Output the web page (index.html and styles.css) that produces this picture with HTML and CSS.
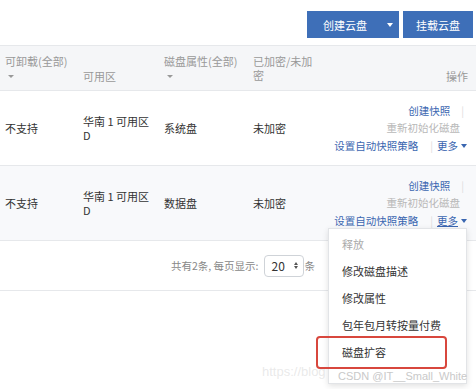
FILE: index.html
```html
<!DOCTYPE html>
<html lang="zh">
<head>
<meta charset="utf-8">
<link rel="stylesheet" href="styles.css">
</head>
<body>
<div class="page">
  <div class="toolbar">
    <button class="btn btn-split"><span>创建云盘</span><span class="caret-w"></span></button>
    <button class="btn">挂载云盘</button>
  </div>
  <div class="table">
    <div class="row head">
      <div class="cell c1"><div>可卸载(全部)</div><span class="caret-g"></span></div>
      <div class="cell c2 mid">可用区</div>
      <div class="cell c3"><div>磁盘属性(全部)</div><span class="caret-g"></span></div>
      <div class="cell c4">已加密/未加密</div>
      <div class="cell c5 mid">操作</div>
    </div>
    <div class="row body">
      <div class="cell c1 mid">不支持</div>
      <div class="cell c2 mid">华南 1 可用区 D</div>
      <div class="cell c3 mid">系统盘</div>
      <div class="cell c4 mid">未加密</div>
      <div class="cell c5 ops">
        <div class="op-line"><a class="link">创建快照</a><span class="sep">|</span></div>
        <div class="op-line"><span class="disabled pad">重新初始化磁盘</span></div>
        <div class="op-line"><a class="link">设置自动快照策略</a><span class="sep sep2">|</span><a class="link">更多</a><span class="caret-b"></span></div>
      </div>
    </div>
    <div class="row body alt">
      <div class="cell c1 mid">不支持</div>
      <div class="cell c2 mid">华南 1 可用区 D</div>
      <div class="cell c3 mid">数据盘</div>
      <div class="cell c4 mid">未加密</div>
      <div class="cell c5 ops">
        <div class="op-line"><a class="link">创建快照</a><span class="sep">|</span></div>
        <div class="op-line"><span class="disabled pad">重新初始化磁盘</span></div>
        <div class="op-line"><a class="link">设置自动快照策略</a><span class="sep sep2">|</span><a class="link under">更多</a><span class="caret-b"></span></div>
      </div>
    </div>
    <div class="pager">
      <span class="pager-text">共有2条, 每页显示:</span>
      <span class="select"><span>20</span><span class="spin"><i class="up"></i><i class="down"></i></span></span>
      <span class="pager-text">条</span>
    </div>
  </div>

  <ul class="menu">
    <li class="menu-item disabled">释放</li>
    <li class="menu-item">修改磁盘描述</li>
    <li class="menu-item">修改属性</li>
    <li class="menu-item">包年包月转按量付费</li>
    <li class="menu-item">磁盘扩容</li>
  </ul>
  <div class="highlight"></div>
  <div class="wm1">https://blog</div>
  <div class="wm2">CSDN @IT__Small_White</div>
</div>
</body>
</html>
```
FILE: styles.css
```css
* { box-sizing: border-box; }
html, body { margin: 0; padding: 0; background: #fff; }
body {
  font-family: "Noto Sans CJK SC", "Liberation Sans", sans-serif;
  font-size: 11px;
  color: #333;
  width: 476px;
  height: 389px;
  overflow: hidden;
}
.page { position: relative; width: 476px; height: 389px; }

.toolbar {
  display: flex;
  justify-content: flex-end;
  gap: 4px;
  padding: 11px 3px 0 0;
  height: 45px;
}
.btn {
  height: 27px;
  border: none;
  background: #3e6fb8;
  color: #fff;
  font-family: inherit;
  font-size: 11px;
  padding: 0;
  white-space: nowrap;
  display: flex;
  align-items: center;
  width: 70px;
  justify-content: center;
}
.btn-split { width: 92px; padding: 0 0 0 16px; justify-content: flex-start; gap: 20px; }
.caret-w {
  width: 0; height: 0;
  border-left: 3.5px solid transparent;
  border-right: 3.5px solid transparent;
  border-top: 4px solid #fff;
}

.table { border-top: 1px solid #e6e8eb; }
.row { display: flex; }
.head {
  height: 45px;
  background: #f5f6f8;
  border-bottom: 1px solid #e6e8eb;
  color: #999;
}
.body { height: 75px; border-bottom: 1px solid #e6e8eb; background: #fff; }
.body.alt { background: #f8f9fb; }
.cell { padding-left: 5px; display: flex; flex-direction: column; justify-content: center; line-height: 14px; }
.head .cell { justify-content: flex-start; padding-top: 8px; }
.head .cell.mid { padding-top: 23px; }
.c1 { width: 78px; }
.c2 { width: 81px; }
.c3 { width: 89px; }
.c4 { width: 66px; padding-right: 0; }
.c5 { flex: 1; align-items: flex-end; padding-right: 9px; }
.head .c5 { padding-right: 8px; }
.body .c2 { padding-right: 6px; }
.caret-g {
  display: block;
  margin: 7px 0 0 3px;
  width: 0; height: 0;
  border-left: 3px solid transparent;
  border-right: 3px solid transparent;
  border-top: 3.5px solid #999;
}
.ops { justify-content: center; gap: 3.5px; padding-top: 0; font-size: 10.5px; }
.op-line { display: flex; align-items: center; line-height: 14px; }
.link { color: #3a66b0; }
.link.under { text-decoration: underline; }
.disabled { color: #b8b8b8; }
.pad { padding-right: 7px; }
.sep { color: #ddd; margin-left: 11px; margin-right: 3px; }
.sep2 { margin-left: 12px; margin-right: 4px; }
.caret-b {
  margin-left: 3px;
  width: 0; height: 0;
  border-left: 3px solid transparent;
  border-right: 3px solid transparent;
  border-top: 4px solid #3a66b0;
}

.pager {
  height: 50px;
  display: flex;
  align-items: center;
  justify-content: flex-end;
  padding-right: 161px;
  border-bottom: 1px solid #e6e8eb;
  color: #888;
  font-size: 10.5px;
}
.select {
  margin-left: 5px;
  margin-right: 1px;
  width: 40px;
  height: 22px;
  border: 1px solid #cfd3d8;
  border-radius: 4px;
  display: flex;
  align-items: center;
  justify-content: space-between;
  padding: 0 5px 0 7px;
  color: #333;
  font-size: 12px;
}
.spin { display: flex; flex-direction: column; gap: 1px; }
.spin i { display: block; width: 0; height: 0; border-left: 2.5px solid transparent; border-right: 2.5px solid transparent; }
.spin .up { border-bottom: 3px solid #555; }
.spin .down { border-top: 3px solid #555; }

.menu {
  position: absolute;
  left: 328px;
  top: 228px;
  width: 139px;
  height: 156px;
  margin: 0;
  padding: 2px 0 0 0;
  list-style: none;
  background: #fff;
  border: 1px solid #e2e4e7;
  box-shadow: 0 2px 6px rgba(0,0,0,0.12);
}
.menu-item { height: 27px; line-height: 27px; padding-left: 13px; color: #333; }
.menu-item.disabled { color: #aaa; }

.highlight {
  position: absolute;
  left: 316px;
  top: 336px;
  width: 131px;
  height: 33px;
  border: 2px solid #d8473d;
  border-radius: 4px;
}
.wm1 {
  position: absolute;
  left: 262px;
  top: 364px;
  white-space: nowrap;
  font-family: "Liberation Sans", sans-serif;
  font-size: 13px;
  line-height: 16px;
  color: rgba(200,200,200,0.4);
}
.wm2 {
  position: absolute;
  left: 338px;
  top: 370px;
  font-family: "Liberation Sans", sans-serif;
  font-size: 11px;
  line-height: 13px;
  color: #c9c9c9;
}
```
